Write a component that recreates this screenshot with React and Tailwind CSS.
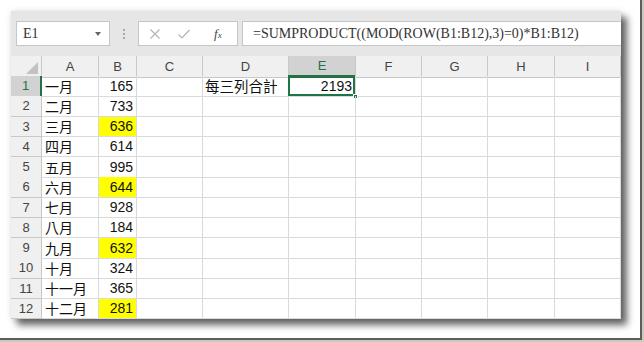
import React from 'react';

const months = ['一月', '二月', '三月', '四月', '五月', '六月', '七月', '八月', '九月', '十月', '十一月', '十二月'];
const values = [165, 733, 636, 614, 995, 644, 928, 184, 632, 324, 365, 281];
const letters = ['A', 'B', 'C', 'D', 'E', 'F', 'G', 'H', 'I'];

const gridCols = 'grid grid-cols-[31px_57px_38px_66px_86px_67px_66px_66px_67px_66px]';
const cjk = "font-['Noto_Sans_CJK_TC','Noto_Sans',sans-serif]";
const num = "font-['Liberation_Sans',Arial,sans-serif]";

const FormulaBar = () => (
  <div className="flex h-[45px] items-start bg-[#e6e6e6] pl-[5px] pt-[10px]">
    {/* Name box */}
    <div className="relative flex h-[25px] w-[94px] items-center border border-[#c6c6c6] bg-white pl-[6px] font-['Liberation_Serif',serif] text-[14px] text-[#333]">
      E1
      <span className="absolute right-[8px] top-[10px] h-0 w-0 border-x-[3px] border-t-[4px] border-x-transparent border-t-[#666]" />
    </div>

    {/* Separator dots */}
    <div className="flex h-[25px] w-[28px] flex-col items-center justify-center gap-[2px]">
      <span className="h-[2px] w-[2px] bg-[#a8a8a8]" />
      <span className="h-[2px] w-[2px] bg-[#a8a8a8]" />
      <span className="h-[2px] w-[2px] bg-[#a8a8a8]" />
    </div>

    {/* Cancel / Enter / Function */}
    <div className="flex h-[25px] w-[100px] items-center border border-[#c6c6c6] bg-white pl-[10px]">
      <svg width="12" height="12" viewBox="0 0 12 12" className="shrink-0">
        <path d="M1.5 1.5l9 9M10.5 1.5l-9 9" stroke="#b4b4b4" strokeWidth="1.2" fill="none" />
      </svg>
      <svg width="14" height="12" viewBox="0 0 14 12" className="ml-[16px] shrink-0">
        <path d="M1.5 6.5l3.5 3.5 7.5-8" stroke="#b4b4b4" strokeWidth="1.2" fill="none" />
      </svg>
      <span className="ml-[23px] font-['Liberation_Serif',serif] text-[13px] italic text-[#444]">
        f<span className="text-[9px]">x</span>
      </span>
    </div>

    {/* Formula */}
    <div className="ml-[4px] flex h-[25px] flex-1 items-center border-y border-l border-[#c6c6c6] bg-white pl-[10px] font-['Liberation_Serif',serif] text-[14px] tracking-[0.0px] text-[#333]">
      =SUMPRODUCT((MOD(ROW(B1:B12),3)=0)*B1:B12)
    </div>
  </div>
);

const HeaderRow = () => (
  <div className={`${gridCols} h-[20px]`}>
    <div className="flex items-end justify-end border-r border-b border-[#c8c8c8] bg-[#f0f0f0] pb-[3px] pr-[3px]">
      <svg width="12" height="12" viewBox="0 0 12 12">
        <path d="M12 0L12 12L0 12Z" fill="#c2c2c2" />
      </svg>
    </div>
    {letters.map((l) => (
      <div
        key={l}
        className={`flex items-center justify-center border-r border-[#c8c8c8] ${num} text-[13px] ${
          l === 'E'
            ? 'border-b-2 border-b-[#217346] bg-[#d2d2d2] text-[#217346]'
            : 'border-b bg-[#f0f0f0] text-[#444]'
        }`}
      >
        {l}
      </div>
    ))}
  </div>
);

const DataRow = ({ i }) => {
  const r = i + 1;
  const hi = r % 3 === 0;
  const cell = 'border-r border-b border-[#dadada] flex items-end pb-[1px]';
  return (
    <div className={`${gridCols}`}>
      <div
        className={`flex items-center justify-center border-b border-[#c8c8c8] ${num} text-[13px] ${
          r === 1 ? 'border-r-2 border-r-[#217346] bg-[#d2d2d2] text-[#217346]' : 'border-r bg-[#f0f0f0] text-[#444]'
        }`}
      >
        {r}
      </div>
      <div className={`${cell} pl-[3px] ${cjk} text-[14px] leading-[18px] text-[#111]`}>{months[i]}</div>
      <div className={`${cell} justify-end pr-[3px] ${num} text-[14px] leading-[18px] text-[#111] ${hi ? 'bg-[#ffff00]' : ''}`}>
        {values[i]}
      </div>
      <div className={cell} />
      <div className={`${cell} pl-[2px] ${cjk} text-[14.5px] leading-[18px] text-[#111]`}>{r === 1 ? '每三列合計' : ''}</div>
      <div className={`${cell} relative justify-end pr-[3px] ${num} text-[14px] leading-[18px] text-[#111]`}>
        {r === 1 && (
          <>
            2193
            <span className="absolute -left-px -top-px bottom-0 right-0 border-2 border-[#217346]" />
            <span className="absolute -bottom-[3px] -right-[3px] h-[5px] w-[5px] border border-white bg-[#217346]" />
          </>
        )}
      </div>
      <div className={cell} />
      <div className={cell} />
      <div className={cell} />
      <div className={cell} />
    </div>
  );
};

export default function App() {
  return (
    <div className="h-[342px] w-[644px] bg-[#cbcbbd]">
      <div className="h-[340px] w-[642px] border-b-2 border-r-2 border-[#5c5c5c] bg-white pl-[11px] pt-[11px]">
        <div className="h-[308px] w-[610px] overflow-hidden bg-white shadow-[6px_6px_7px_rgba(0,0,0,0.6),0_0_6px_rgba(0,0,0,0.12)]">
          <FormulaBar />
          <HeaderRow />
          <div className="grid grid-rows-[repeat(12,20.25px)]">
            {months.map((m, i) => (
              <DataRow key={m} i={i} />
            ))}
          </div>
        </div>
      </div>
    </div>
  );
}
